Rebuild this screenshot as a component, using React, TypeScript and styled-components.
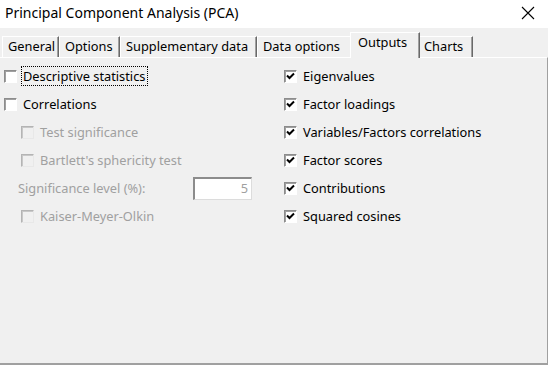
import React from 'react'
import styled, { createGlobalStyle } from 'styled-components'

const GlobalStyle = createGlobalStyle`
  html, body {
    margin: 0;
    padding: 0;
    background: #f0f0f0;
  }
  body {
    font-family: "Noto Sans", "Open Sans", sans-serif;
    font-size: 12.8px;
    color: #000;
  }
`

const Window = styled.div`
  width: 548px;
  height: 365px;
  display: flex;
  flex-direction: column;
  background: #f0f0f0;
  overflow: hidden;
`

const TitleBar = styled.div`
  height: 28px;
  flex: none;
  display: flex;
  align-items: center;
  justify-content: space-between;
  background: #fff;
  padding: 0 6px 0 5px;
`

const Title = styled.span`
  font-size: 14px;
  color: #000;
  margin-top: -4px;
`

const CloseButton = styled.div`
  width: 16px;
  height: 16px;
  margin-right: 6px;
  margin-top: -3px;
  display: flex;
  align-items: center;
  justify-content: center;
`

const TabStrip = styled.div`
  height: 29px;
  flex: none;
  display: flex;
  align-items: flex-end;
  padding-left: 2px;
`

const Tab = styled.div<{ active?: boolean; w: number }>`
  position: relative;
  box-sizing: border-box;
  width: ${({ w, active }) => (active ? w + 4 : w)}px;
  height: ${({ active }) => (active ? '26px' : '21px')};
  margin: ${({ active }) => (active ? '0 -2px -1px -2px' : '0')};
  padding: ${({ active }) => (active ? '1px 0 0 7px' : '1px 0 0 5px')};
  border-left: 1px solid #fff;
  border-top: 1px solid #fff;
  border-right: 1px solid #696969;
  box-shadow: inset -1px 0 0 #a0a0a0;
  background: #f0f0f0;
  z-index: ${({ active }) => (active ? 1 : 0)};
  white-space: nowrap;
  line-height: 17px;
`

const Panel = styled.div`
  flex: 1;
  box-sizing: border-box;
  border-top: 1px solid #fff;
  border-right: 1px solid #a0a0a0;
  border-bottom: 2px solid #a0a0a0;
  padding: 4px 0 0 4px;
  display: grid;
  grid-template-columns: 280px 1fr;
  align-content: start;
`

const Column = styled.div`
  display: flex;
  flex-direction: column;
`

const Row = styled.div<{ indent?: boolean }>`
  height: 28px;
  display: flex;
  align-items: center;
  padding-left: ${({ indent }) => (indent ? '17px' : '0')};
`

const Box = styled.span<{ disabled?: boolean }>`
  box-sizing: border-box;
  width: 13px;
  height: 13px;
  flex: none;
  display: flex;
  align-items: center;
  justify-content: center;
  border-top: 1px solid ${({ disabled }) => (disabled ? '#b4b4b4' : '#8c8c8c')};
  border-left: 1px solid ${({ disabled }) => (disabled ? '#b4b4b4' : '#8c8c8c')};
  border-right: 1px solid ${({ disabled }) => (disabled ? '#e8e8e8' : '#fff')};
  border-bottom: 1px solid ${({ disabled }) => (disabled ? '#e8e8e8' : '#fff')};
  background: ${({ disabled }) => (disabled ? '#f0f0f0' : '#fff')};
  box-shadow: inset 1px 1px 0 ${({ disabled }) => (disabled ? '#c8c8c8' : '#a0a0a0')};
`

const Label = styled.span<{ disabled?: boolean; focused?: boolean }>`
  margin-left: 4px;
  padding: 0 2px 0 1px;
  color: ${({ disabled }) => (disabled ? '#a0a0a0' : '#000')};
  border: 1px ${({ focused }) => (focused ? 'dotted #000' : 'solid transparent')};
  line-height: 18px;
  white-space: nowrap;
`

const FieldLabel = styled.span`
  color: #a0a0a0;
  width: 175px;
  flex: none;
  white-space: nowrap;
  padding-left: 14px;
`

const NumberInput = styled.div`
  box-sizing: border-box;
  width: 59px;
  height: 23px;
  border-top: 2px solid #8c8c8c;
  border-left: 2px solid #8c8c8c;
  border-right: 1px solid #dcdcdc;
  border-bottom: 1px solid #dcdcdc;
  background: #fff;
  color: #a0a0a0;
  text-align: right;
  padding-right: 3px;
  line-height: 19px;
`

type CheckProps = {
  label: string
  checked?: boolean
  disabled?: boolean
  focused?: boolean
  indent?: boolean
}

const Check = ({ label, checked, disabled, focused, indent }: CheckProps) => (
  <Row indent={indent}>
    <Box disabled={disabled}>
      {checked && (
        <svg width="9" height="9" viewBox="0 0 9 9">
          <path d="M1 3.5 L3.5 6 L8 1.5" stroke="#000" strokeWidth="2" fill="none" />
        </svg>
      )}
    </Box>
    <Label disabled={disabled} focused={focused}>{label}</Label>
  </Row>
)

const tabs = [
  { name: 'General', w: 57 },
  { name: 'Options', w: 61 },
  { name: 'Supplementary data', w: 137 },
  { name: 'Data options', w: 95 },
  { name: 'Outputs', w: 66 },
  { name: 'Charts', w: 55 },
]

const App = () => (
  <Window>
    <GlobalStyle />
    <TitleBar>
      <Title>Principal Component Analysis (PCA)</Title>
      <CloseButton>
        <svg width="14" height="14" viewBox="0 0 14 14">
          <path d="M1 1 L13 13 M13 1 L1 13" stroke="#000" strokeWidth="1.1" />
        </svg>
      </CloseButton>
    </TitleBar>
    <TabStrip>
      {tabs.map((t) => (
        <Tab key={t.name} w={t.w} active={t.name === 'Outputs'}>{t.name}</Tab>
      ))}
    </TabStrip>
    <Panel>
      <Column>
        <Check label="Descriptive statistics" focused />
        <Check label="Correlations" />
        <Check label="Test significance" disabled indent />
        <Check label="Bartlett's sphericity test" disabled indent />
        <Row>
          <FieldLabel>Significance level (%):</FieldLabel>
          <NumberInput>5</NumberInput>
        </Row>
        <Check label="Kaiser-Meyer-Olkin" disabled indent />
      </Column>
      <Column>
        <Check label="Eigenvalues" checked />
        <Check label="Factor loadings" checked />
        <Check label="Variables/Factors correlations" checked />
        <Check label="Factor scores" checked />
        <Check label="Contributions" checked />
        <Check label="Squared cosines" checked />
      </Column>
    </Panel>
  </Window>
)

export default App
